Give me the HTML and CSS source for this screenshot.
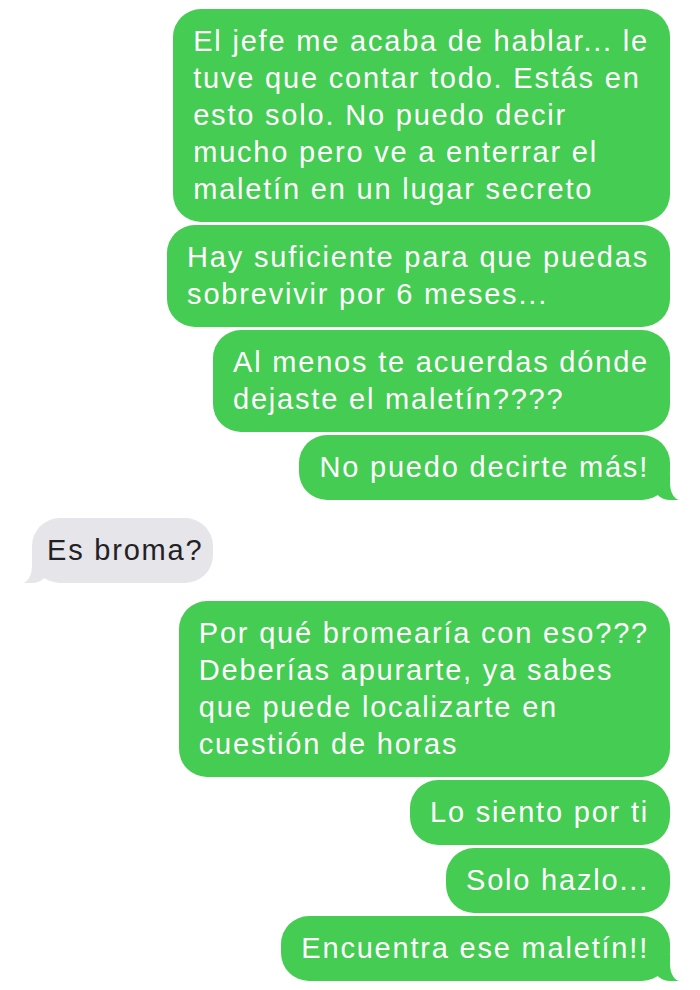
FILE: index.html
```html
<!DOCTYPE html>
<html lang="es">
  <head>
    <meta charset="UTF-8" />
    <meta name="viewport" content="width=device-width, initial-scale=1.0" />
    <title>Mensajes</title>
    <link rel="stylesheet" href="styles.css">
  </head>
  <body>
    <div class="chat">
      <div class="group sent">
        <p class="bubble">El jefe me acaba de hablar... le<br>tuve que contar todo. Estás en<br>esto solo. No puedo decir<br>mucho pero ve a enterrar el<br>maletín en un lugar secreto</p>
        <p class="bubble">Hay suficiente para que puedas<br>sobrevivir por 6 meses...</p>
        <p class="bubble">Al menos te acuerdas dónde<br>dejaste el maletín????</p>
        <p class="bubble tail">No puedo decirte más!</p>
      </div>

      <div class="group received">
        <p class="bubble tail">Es broma?</p>
      </div>

      <div class="group sent">
        <p class="bubble">Por qué bromearía con eso???<br>Deberías apurarte, ya sabes<br>que puede localizarte en<br>cuestión de horas</p>
        <p class="bubble">Lo siento por ti</p>
        <p class="bubble">Solo hazlo...</p>
        <p class="bubble tail">Encuentra ese maletín!!</p>
      </div>
    </div>
  </body>
</html>
```

FILE: styles.css
```css
* {
  box-sizing: border-box;
}
body {
  margin: 0;
  background-color: #ffffff;
  font-family: "Liberation Sans", Arial, Helvetica, sans-serif;
}
.chat {
  display: flex;
  flex-direction: column;
  gap: 18px;
  padding: 9px 0 0;
}
.group {
  display: flex;
  flex-direction: column;
  gap: 3px;
}
.group.sent {
  align-items: flex-end;
  padding-right: 30px;
}
.group.received {
  align-items: flex-start;
  padding-left: 32px;
}
.bubble {
  position: relative;
  margin: 0;
  padding: 14px 21px 14px 20px;
  border-radius: 28px;
  font-size: 29px;
  line-height: 37px;
  letter-spacing: 1.8px;
  white-space: nowrap;
}
.sent .bubble {
  background-color: #45cc52;
  color: #ffffff;
}
.received .bubble {
  background-color: #e5e5ea;
  color: #222225;
  padding: 14px 10px 14px 15px;
}

/* tails */
.bubble.tail::before,
.bubble.tail::after {
  content: "";
  position: absolute;
  bottom: 0;
  height: 26px;
}
.sent .bubble.tail::before {
  right: -12px;
  width: 26px;
  background-color: #45cc52;
  border-bottom-left-radius: 14px 10px;
}
.sent .bubble.tail::after {
  right: -20px;
  width: 20px;
  background-color: #ffffff;
  border-bottom-left-radius: 10px 17px;
}
.received .bubble.tail::before {
  left: -12px;
  width: 26px;
  background-color: #e5e5ea;
  border-bottom-right-radius: 14px 10px;
}
.received .bubble.tail::after {
  left: -20px;
  width: 20px;
  background-color: #ffffff;
  border-bottom-right-radius: 10px 17px;
}
```
